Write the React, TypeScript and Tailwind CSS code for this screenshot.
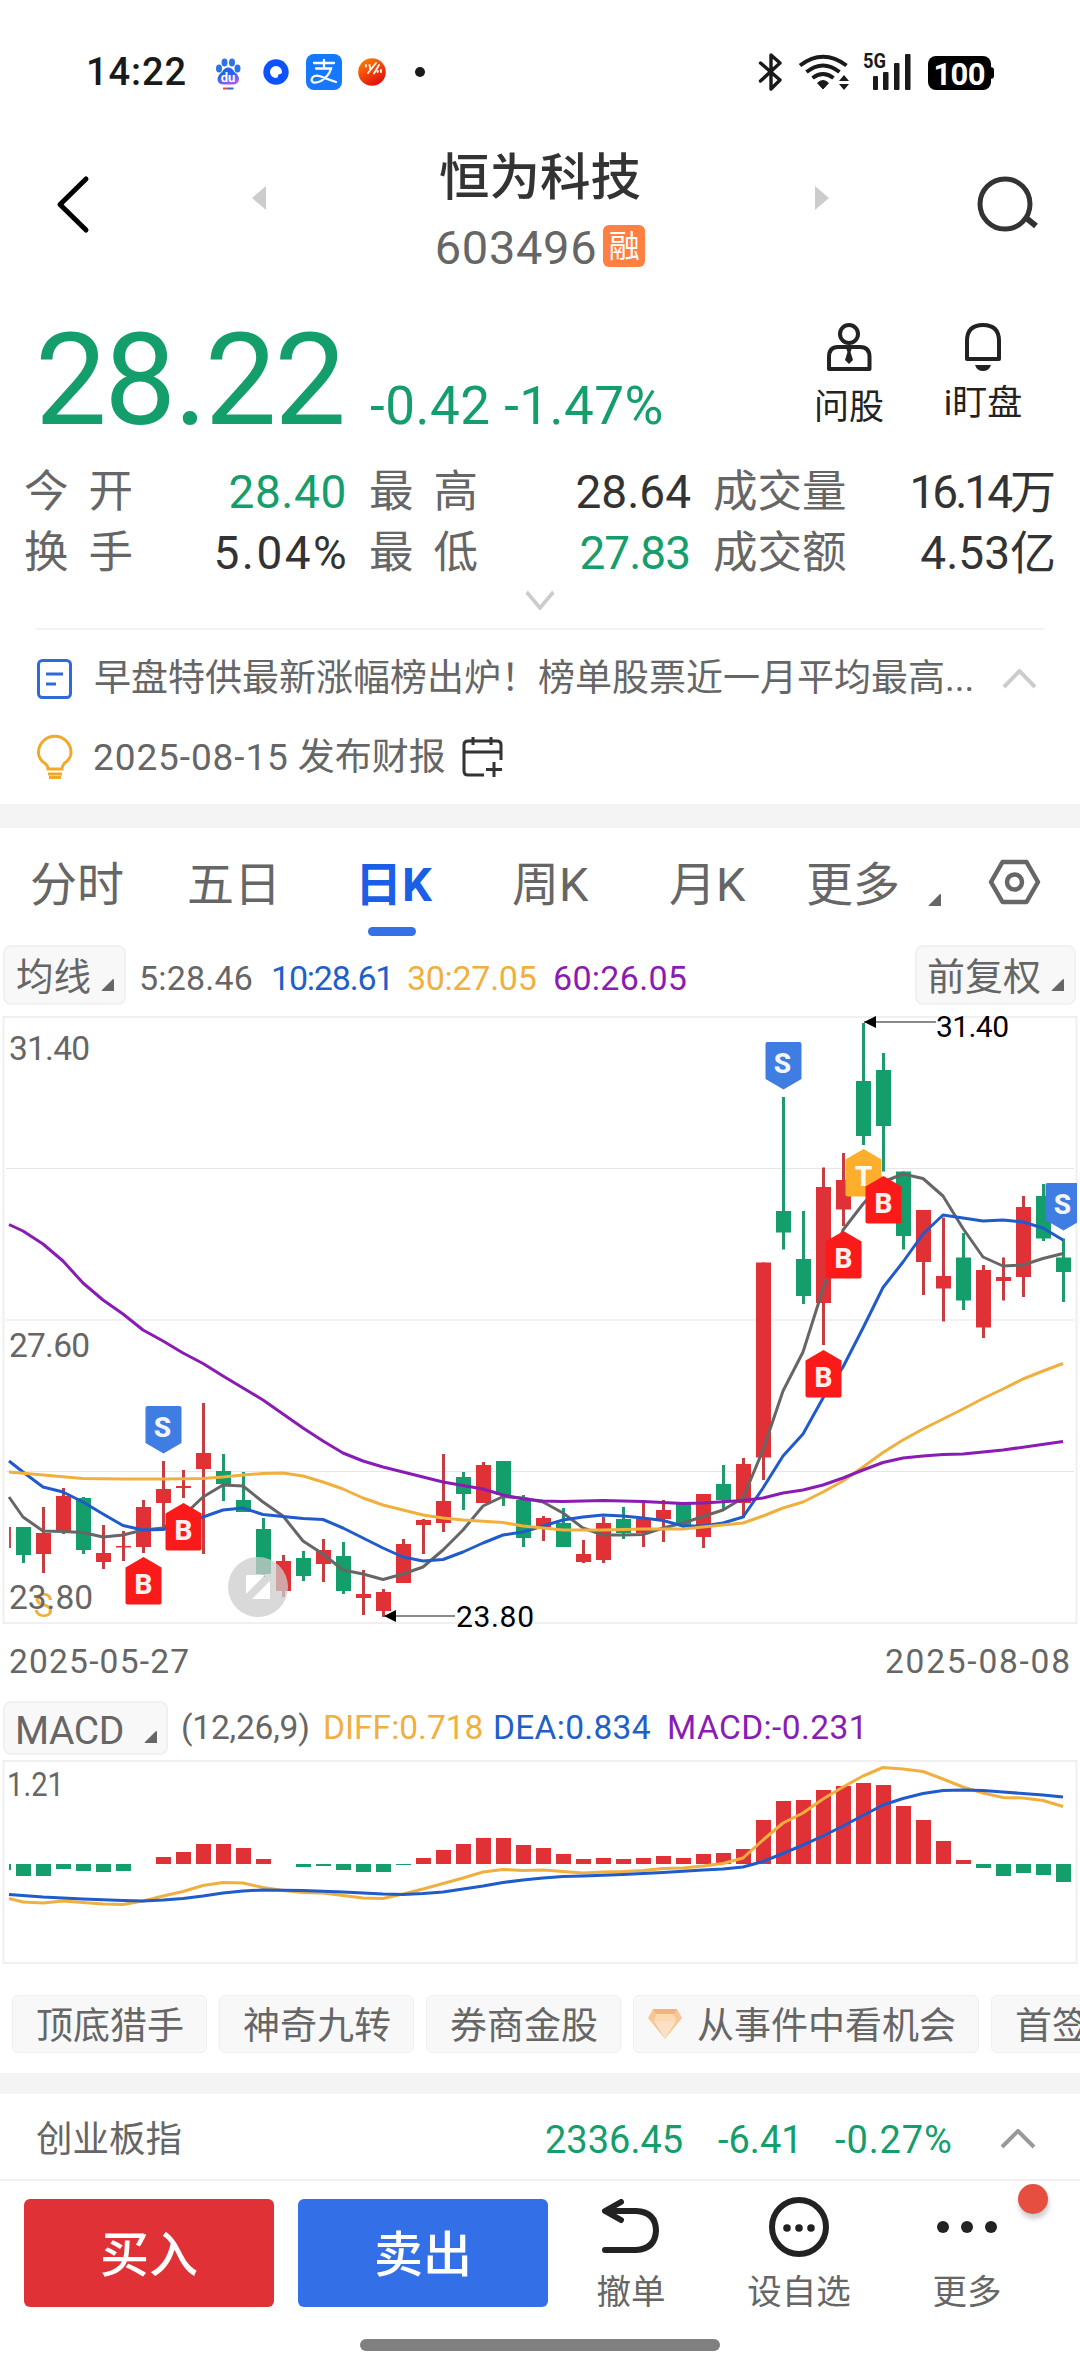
import { clsx } from 'clsx'

const RED = '#e03236'
const GREEN = '#149e6b'

// x of the n-th trading day in both charts
const px = (i: number) => 23.5 + i * 20

// [up, bodyTop, bodyBottom, high, low]
const candles: [number, number, number, number, number][] = [
  [0, 1527, 1555, 1527, 1563],
  [1, 1533, 1554, 1507, 1573],
  [1, 1496, 1531, 1488, 1534],
  [0, 1498, 1550, 1497, 1554],
  [1, 1553, 1562, 1525, 1569],
  [1, 1546, 1547.5, 1531, 1561],
  [1, 1507, 1547, 1500, 1553],
  [1, 1489, 1503, 1461, 1527],
  [1, 1486, 1488, 1470, 1498],
  [1, 1453, 1469, 1403, 1554],
  [0, 1471, 1484, 1454, 1501],
  [0, 1500, 1512, 1472, 1512],
  [0, 1529, 1574, 1518, 1577],
  [1, 1561, 1591, 1555, 1597],
  [0, 1558, 1576, 1551, 1581],
  [1, 1550, 1564, 1539, 1582],
  [0, 1556, 1591, 1542, 1594],
  [1, 1594, 1598, 1570, 1615],
  [1, 1592, 1611, 1589, 1617],
  [1, 1544, 1583, 1539, 1583],
  [1, 1520, 1525, 1519, 1554],
  [1, 1501, 1523, 1454, 1532],
  [0, 1477, 1494, 1472, 1510],
  [1, 1465, 1503, 1462, 1503],
  [0, 1461, 1495, 1461, 1506],
  [0, 1500, 1538, 1495, 1547],
  [1, 1518, 1527, 1516, 1541],
  [0, 1523, 1547, 1508, 1547],
  [1, 1554, 1562, 1540, 1563],
  [1, 1523, 1560, 1517, 1563],
  [0, 1519, 1533, 1507, 1539],
  [1, 1519, 1533, 1500, 1547],
  [1, 1510, 1519, 1500, 1542],
  [0, 1504, 1526, 1504, 1530],
  [1, 1494, 1537, 1494, 1548],
  [0, 1484, 1500, 1465, 1509],
  [1, 1464, 1503, 1458, 1518],
  [1, 1262.5, 1457.5, 1262.5, 1480],
  [0, 1211, 1232.5, 1097, 1249.5],
  [0, 1259, 1296, 1211, 1304],
  [1, 1187, 1303, 1167.5, 1345],
  [1, 1180, 1209.5, 1153, 1226],
  [0, 1081, 1136, 1023, 1145],
  [0, 1070, 1126, 1053, 1171.5],
  [0, 1171.5, 1236, 1171.5, 1249.5],
  [1, 1210, 1262, 1210, 1295],
  [1, 1276, 1288.5, 1217.5, 1321.5],
  [0, 1257.5, 1300.5, 1233, 1310],
  [1, 1270, 1327.5, 1265, 1338],
  [1, 1277, 1281, 1257.5, 1300.5],
  [1, 1207, 1277, 1196, 1297],
  [0, 1196, 1238.5, 1184, 1241],
  [0, 1257.5, 1272, 1238.5, 1302],
]

const ma5 = '9,1497 23,1517 43,1531 63,1531.5 83,1532.5 103,1537 123,1535 143,1530 163,1528 183,1516 203,1497 223,1485 243,1486 263,1502 283,1516 303,1541 323,1554 343,1570 363,1574 383,1579.5 403,1574 423,1567 443,1550 463,1530 483,1506 503,1496.5 523,1498 543,1502 563,1513 583,1528 603,1535 623,1535 643,1534.5 663,1528 683,1523 703,1516.5 723,1510 743,1498 763,1450 783,1391 803,1352 823,1289 843,1230 863,1204 883,1182 903,1174 923,1178.5 943,1196 963,1228.5 983,1257 1003,1266 1023,1265 1043,1258.5 1063,1253.5'
const ma10 = '9,1461 23,1472 43,1487 63,1492 83,1502 103,1514 123,1525.5 143,1530 163,1529.5 183,1523 203,1517 223,1510 243,1508 263,1514.5 283,1516.5 303,1518.5 323,1519.5 343,1528 363,1538 383,1548 403,1557 423,1561 443,1559.5 463,1552 483,1543 503,1535 523,1532 543,1526 563,1520 583,1517 603,1515 623,1516 643,1518 663,1520.5 683,1526 703,1526 723,1523 743,1517 763,1488 783,1456 803,1434 823,1398 843,1367 863,1328 883,1287.5 903,1262 923,1234 943,1215 963,1218 983,1221 1003,1220 1023,1222 1043,1228 1063,1240'
const ma30 = '9,1472 43,1475 83,1478.5 123,1479 163,1479 203,1478.5 223,1477 243,1475 263,1473.5 283,1473 303,1476 323,1482 343,1489 363,1498 383,1505 403,1510 423,1515 443,1518 463,1520 503,1522.5 523,1526 543,1528 563,1530 603,1530 643,1529 683,1529 703,1527 743,1523 763,1516 783,1508 803,1502 823,1492 843,1481 863,1467 883,1452.5 903,1440 923,1429 943,1419 963,1409 983,1398.5 1003,1389 1023,1379 1043,1371 1063,1363.5'
const ma60 = '9,1224.5 23,1231 43,1244 63,1261 83,1283 103,1300 123,1314 143,1330 163,1341 183,1353 203,1363.5 223,1376 243,1388 263,1400 283,1414 303,1428 323,1441 343,1453 363,1461 383,1467 403,1472 443,1482 483,1489 503,1495 523,1499 543,1501 563,1501.5 603,1500.5 643,1501.5 683,1503.5 703,1503 743,1500.5 763,1498 783,1493 803,1490 823,1485 843,1478 863,1470 883,1462.5 903,1458 923,1456 943,1454.5 963,1454 1003,1450 1063,1441.5'

const bars = [
  -12, -12, -5, -7, -8, -7, 0, 7, 12, 20, 20, 16, 5, 0, -3, -2, -6, -8, -8, -1, 6, 14, 20, 26, 26, 19, 16, 10, 5, 6, 5, 6,
  8, 6, 10, 11, 15, 44, 63, 64, 74, 78, 81, 79, 58, 44, 23, 4, -4, -12, -9, -11, -18,
]
const diff = '9,1898.5 23,1902 43,1903 63,1901 83,1902.5 103,1904 123,1904.5 143,1901 163,1896 183,1891.5 203,1885.5 223,1882.5 243,1883 263,1887.5 283,1890.5 303,1892.5 323,1893 343,1895.5 363,1898 383,1898.5 403,1894 423,1889 443,1883.5 463,1878 483,1872 503,1869.5 523,1870.5 543,1870 563,1871.5 583,1873 603,1872 623,1871.5 643,1870.5 663,1868.5 683,1868 703,1866 723,1863.5 743,1858 763,1840 783,1823 803,1813 823,1799 843,1787 863,1776 883,1767.5 903,1769 923,1771.5 943,1779 963,1787 983,1793 1003,1797.5 1023,1798 1043,1800.5 1063,1806.5'
const dea = '9,1894.5 43,1897 83,1899 123,1900.5 143,1901 163,1900 183,1898.5 203,1896 223,1893 243,1891 263,1890 303,1890.5 343,1892 383,1894 403,1894.5 423,1893.5 443,1892 463,1889 483,1886 503,1882.5 523,1880 543,1878 563,1876.5 583,1876 623,1874.5 663,1872.5 703,1870 723,1869 743,1867 763,1861.5 783,1853.5 803,1845 823,1836 843,1826 863,1815.5 883,1805 903,1798.5 923,1793.5 943,1790.5 963,1790 983,1790.5 1003,1792 1023,1793.5 1043,1795 1063,1797'

const marks: { x: number; y: number; t: 'S' | 'B' | 'T' }[] = [
  { x: 163.5, y: 1406, t: 'S' },
  { x: 143.5, y: 1557, t: 'B' },
  { x: 183.5, y: 1503, t: 'B' },
  { x: 783.5, y: 1042, t: 'S' },
  { x: 863.5, y: 1149, t: 'T' },
  { x: 883.5, y: 1176, t: 'B' },
  { x: 843.5, y: 1231, t: 'B' },
  { x: 823.5, y: 1350, t: 'B' },
  { x: 1063.5, y: 1183, t: 'S' },
]

function Mark({ x, y, t }: { x: number; y: number; t: 'S' | 'B' | 'T' }) {
  const down = t === 'S'
  return (
    <g transform={`translate(${x} ${y})`}>
      <path
        d={
          down
            ? 'M-16 0H16Q18 0 18 2V37L0 47.5L-18 37V2Q-18 0 -16 0Z'
            : 'M0 0L18 10.500V45.500Q18 47.500 16 47.500H-16Q-18 47.500 -18 45.500V10.500Z'
        }
        fill={down ? '#3f7de3' : t === 'B' ? '#fa1a1a' : '#ffae2b'}
      />
      <text x={down ? -1 : 0} y={down ? 30.5 : 37} textAnchor="middle" fontSize="28" fontWeight="800" fill="#fff" opacity="0.93">
        {t}
      </text>
    </g>
  )
}

function Corner() {
  return (
    <svg width="14" height="13" viewBox="0 0 14 13" className="shrink-0">
      <path d="M12 0Q13 0 13 1V12H1Q0 12 1 11Z" fill="#666" />
    </svg>
  )
}

function Chevron({ down, color, w }: { down?: boolean; color: string; w: number }) {
  return (
    <svg width={w} height="20" viewBox="0 0 36 20" preserveAspectRatio="none" fill="none" stroke={color} strokeWidth="4">
      <path d={down ? 'M2 2L18 18L34 2' : 'M2 18L18 2L34 18'} />
    </svg>
  )
}

function StatusBar() {
  return (
    <div className="flex h-[120px] items-center pt-[24px]">
      <span className="ml-[86px] w-[102px] text-[38px] font-medium leading-none tracking-[0.9px] text-[#1a1a1a]">14:22</span>
      <svg width="240" height="60" viewBox="0 0 240 60" className="mb-[4px] ml-[12px]">
        <defs>
          <linearGradient id="paw" x1="0" y1="0" x2="0.4" y2="1">
            <stop offset="0.5" stopColor="#2563eb" />
            <stop offset="1" stopColor="#a05cf5" />
          </linearGradient>
          <linearGradient id="sun" x1="0" y1="0" x2="0.6" y2="1">
            <stop offset="0" stopColor="#ff8a00" />
            <stop offset="1" stopColor="#e50f0f" />
          </linearGradient>
        </defs>
        <g fill="#2c72e8">
          <ellipse cx="19" cy="28.500" rx="3" ry="4" />
          <ellipse cx="24.500" cy="22.500" rx="3" ry="4" />
          <ellipse cx="32" cy="22.500" rx="3" ry="4" />
          <ellipse cx="37.500" cy="28.500" rx="3" ry="4" />
          <path d="M28 27.500Q32 27.500 34.500 32Q39 35 39 39.500Q38 44.500 33 44.500H23Q17.500 44 17.500 39Q18 35 22 32Q24.500 27.500 28 27.500Z" fill="url(#paw)" />
        </g>
        <text x="28" y="42" fontSize="13" fontWeight="700" textAnchor="middle" fill="#fff">du</text>
        <path d="M23 48.500H28" stroke="#e44" strokeWidth="2" />
        <path d="M28 48.500H33.500" stroke="#36c" strokeWidth="2" />
        <circle cx="76" cy="32" r="12.700" fill="#0d52ff" />
        <path d="M82 32A6 6 0 1 0 76 38Q78 38 78 36Q78 34 80 34Q82 34 82 32Z" fill="#fff" />
        <rect x="106" y="14" width="36" height="36" rx="8" fill="#1677ff" />
        <g fill="none" stroke="#fff" strokeWidth="2.300" strokeLinecap="round">
          <path d="M114 23H134M124 20V28M116 28.500H131Q129 36 121 41Q112 45 111.500 39.500Q113 34 121 36.500Q130 40 136 42" />
        </g>
        <circle cx="172" cy="32" r="13.800" fill="url(#sun)" />
        <path d="M166 25V26.500M169.500 25L170.500 30M176 23L168 33M179 25L174 33.500M178 31L177.500 32M181 30V32" stroke="#fff" strokeWidth="1.800" strokeLinecap="round" />
        <circle cx="220" cy="32" r="5" fill="#1a1a1a" />
      </svg>
      <svg width="256" height="60" viewBox="750 40 256 60" className="mb-[4px] ml-[310px]">
        <path d="M760.500 63L780 80L771 89V55L780 63L760.500 81" fill="none" stroke="#1a1a1a" strokeWidth="3.400" strokeLinejoin="round" strokeLinecap="round" />
        <g fill="none" stroke="#1a1a1a" strokeWidth="4">
          <path d="M800 65.500Q823 48 846.500 65.500" />
          <path d="M806.500 72Q823 59 839.500 72" />
          <path d="M812.500 78Q823 70 833.500 78" />
        </g>
        <path d="M817.500 83Q823 78 828.500 83L823 89Z" fill="#1a1a1a" stroke="#1a1a1a" />
        <path d="M844 75L849 81H839ZM844 90L839 84H849Z" fill="#1a1a1a" />
        <text x="863" y="68" fontSize="20" fontWeight="700" textLength="23" lengthAdjust="spacingAndGlyphs" fill="#1a1a1a">5G</text>
        <g fill="#1a1a1a">
          <rect x="873" y="76" width="5" height="14" rx="1" />
          <rect x="883" y="72" width="5.500" height="18" rx="1" />
          <rect x="894" y="63" width="5.500" height="27" rx="1" />
          <rect x="905" y="54" width="5.500" height="36" rx="1" />
        </g>
        <rect x="928" y="56" width="63" height="34" rx="8" />
        <path d="M990 67Q994 67 994 70V76Q994 79 990 79Z" />
        <text x="959.500" y="84.500" fontSize="31" fontWeight="700" textAnchor="middle" textLength="52" fill="#fff">100</text>
      </svg>
    </div>
  )
}

function Header() {
  return (
    <div className="flex h-[168px] pl-[54px]">
      <svg width="40" height="64" viewBox="54 172 40 64" className="mt-[52px]" fill="none" stroke="#000" strokeWidth="5" strokeLinecap="round" strokeLinejoin="round">
        <path d="M86 179L60 204.500L86 230" />
      </svg>
      <svg width="14" height="26" viewBox="0 0 14 26" className="ml-[158px] mt-[65px]">
        <path d="M14 1V25L0 13Z" fill="#ccc" />
      </svg>
      <div className="ml-[159px] flex w-[230px] flex-col items-center pt-[30px]">
        <h1 className="whitespace-nowrap text-[50.5px] font-medium leading-[56px] text-[#333]">恒为科技</h1>
        <div className="mt-[13px] flex items-center gap-[6px]">
          <span className="pt-[4px] text-[47px] leading-[50px] tracking-[0.7px] text-[#666]">603496</span>
          <span className="flex h-[42px] w-[42px] items-center justify-center rounded-[6px] bg-[#ff8040] text-[31px] leading-none text-white">融</span>
        </div>
      </div>
      <svg width="14" height="26" viewBox="0 0 14 26" className="ml-[160px] mt-[65px]">
        <path d="M0 1V25L14 13Z" fill="#ccc" />
      </svg>
      <svg width="64" height="60" viewBox="976 174 64 60" className="ml-[147px] mt-[54px]" fill="none" stroke="#333" strokeWidth="5">
        <circle cx="1005" cy="204" r="25" />
        <path d="M1025 217L1036 226" strokeWidth="6" />
      </svg>
    </div>
  )
}

function Price() {
  return (
    <div className="flex h-[162px] text-[#149e6b]">
      <span className="w-[332px] whitespace-nowrap pl-[35px] pt-[37px] text-[128px] leading-[110px] tracking-[-2.6px]">28.22</span>
      <span className="w-[448px] whitespace-nowrap pl-[38px] pt-[88px] text-[53px] leading-[60px] tracking-[0.5px]">-0.42 -1.47%</span>
      <div className="ml-[34px] flex w-[70px] flex-col items-center pt-[34px] text-[#222]">
        <svg width="48" height="52" viewBox="825 322 48 52" fill="none" stroke="#222" strokeWidth="4">
          <circle cx="849" cy="334" r="9" />
          <path d="M829 369V357Q829 347 838 347H860Q869.500 347 869.500 357V369Z" strokeLinejoin="round" />
          <path d="M846 348H852L850.500 352L853 360L849 364L845 360L847.500 352Z" fill="#222" stroke="none" />
        </svg>
        <span className="mt-[16px] whitespace-nowrap text-[35px] leading-[36px]">问股</span>
      </div>
      <div className="ml-[60px] flex w-[78px] flex-col items-center pt-[34px] text-[#222]">
        <svg width="40" height="52" viewBox="963 322 40 52" fill="none" stroke="#222" strokeWidth="4">
          <path d="M967 359V341Q967 325 983 325Q999 325 999 341V359Z" strokeLinejoin="round" />
          <path d="M975 365H991Q989 371 983 371Q977 371 975 365Z" fill="#222" stroke="none" />
        </svg>
        <span className="mt-[12px] whitespace-nowrap text-[35px] leading-[36px]">i盯盘</span>
      </div>
    </div>
  )
}

// [label, value, value classes]
const stats = [
  [
    ['今 开', '28.40', 'text-[#149e6b] tracking-[0.6px]'],
    ['最 高', '28.64', 'text-[#333]'],
    ['成交量', '16.14万', 'text-[#333] tracking-[-3px] mr-[3px]'],
  ],
  [
    ['换 手', '5.04%', 'text-[#333] tracking-[2.4px] -mr-[2px]'],
    ['最 低', '27.83', 'text-[#149e6b] tracking-[-1px] mr-px'],
    ['成交额', '4.53亿', 'text-[#333]'],
  ],
]

function Stats() {
  return (
    <div className="h-[178px] pt-[12px]">
      {stats.map((row, r) => (
        <div key={r} className="grid h-[61px] grid-cols-[323px_322px_343px] gap-x-[22px] pl-[24px]">
          {row.map(([label, value, cls]) => (
            <div key={label} className="flex items-center justify-between whitespace-nowrap text-[46px] leading-[61px]">
              <span className="text-[44.5px] text-[#666] [word-spacing:9px]">{label}</span>
              <span className={cls}>{value}</span>
            </div>
          ))}
        </div>
      ))}
      <div className="flex justify-center pt-[6px]">
        <Chevron down color="#ccc" w={30} />
      </div>
    </div>
  )
}

function News() {
  return (
    <div className="mx-[36px] h-[176px] border-t-2 border-[#f2f2f2] text-[37px] leading-[50px] text-[#666]">
      <div className="flex items-center pt-[23px]">
        <svg width="37" height="42" viewBox="36 658 37 42" fill="none" stroke="#2f6bd8" strokeWidth="3">
          <rect x="38.500" y="660.500" width="32" height="37" rx="4" />
          <path d="M46 674H63M46 684H56" />
        </svg>
        <span className="ml-[21px] w-[890px] whitespace-nowrap pt-px">早盘特供最新涨幅榜出炉！榜单股票近一月平均最高...</span>
        <span className="ml-[18px]"><Chevron color="#ccc" w={35} /></span>
      </div>
      <div className="flex items-center pt-[27px]">
        <svg width="37" height="46" viewBox="36 731 37 46" fill="none" stroke="#f0a92b" strokeWidth="3">
          <path d="M48 766Q48 762 43 759Q38.500 755 38.500 749.500A16 16 0 0 1 71 749.500Q71 755 66 759Q62 762 62 766ZM48 771H62M49 774.500H61" />
        </svg>
        <span className="ml-[20px] whitespace-nowrap pt-[2px] tracking-[0.9px]">2025-08-15</span>
        <span className="ml-[9px] whitespace-nowrap pt-[2px]">发布财报</span>
        <svg width="44" height="44" viewBox="461 732 44 44" className="ml-[15px]" fill="none" stroke="#333" strokeWidth="3">
          <path d="M501 757V742Q501 738 497 738H468Q464 738 464 742V768Q464 772 468 772H484M464 749H501M473 734V742M491 734V742M486 766.500H502M494 759V774" />
        </svg>
      </div>
    </div>
  )
}

const periods = [
  ['分时', 'w-[157px]'],
  ['五日', 'w-[168px]'],
  ['日K', 'w-[157px]'],
  ['周K', 'w-[157px]'],
  ['月K', 'w-[137px]'],
  ['更多', 'w-[122px]'],
]

function Periods() {
  return (
    <div className="flex h-[116px] items-start pl-[30px] pt-[27px] text-[47px] leading-[60px] text-[#666]">
      {periods.map(([name, w]) => (
        <div key={name} className={clsx('whitespace-nowrap', w, name === '日K' && 'font-bold text-[#1a5fe6]')}>
          {name}
          {name === '日K' && <div className="ml-[13px] mt-[12px] h-[9px] w-[48px] rounded-full bg-[#3470e6]" />}
        </div>
      ))}
      <div className="mt-[39px]"><Corner /></div>
      <svg width="54" height="50" viewBox="987 857 54 50" className="ml-[45px] mt-[2px]" fill="none" stroke="#666" strokeWidth="4.500" strokeLinejoin="round">
        <path d="M1002.500 862H1026.500L1038 882L1026.500 902H1002.500L991 882Z" />
        <circle cx="1014.500" cy="882" r="7.500" />
      </svg>
    </div>
  )
}

function Averages() {
  return (
    <div className="flex h-[72px] items-start pl-[3px] pr-[4px] pt-px text-[34px] leading-[60px]">
      <button className="flex h-[60px] w-[123px] items-center rounded-[8px] border-2 border-[#f1f1f1] bg-[#f8f8f8] pl-[11px] text-[37.5px] text-[#666]">
        <span className="pt-[3px]">均线</span>
        <span className="ml-[10px] mt-[20px]"><Corner /></span>
      </button>
      <div className="ml-[13px] flex gap-[17px] whitespace-nowrap pt-[3px] tracking-[-0.1px]">
        <span className="w-[115px] tracking-[0.2px] text-[#666]">5:28.46</span>
        <span className="w-[119px] tracking-[-1.2px] text-[#1f5fc9]">10:28.61</span>
        <span className="w-[129px] tracking-[-0.3px] text-[#f0b03f]">30:27.05</span>
        <span className="w-[134px] tracking-[0.3px] text-[#8a1bb3]">60:26.05</span>
      </div>
      <button className="ml-auto flex h-[60px] w-[161px] items-center rounded-[8px] border-2 border-[#f1f1f1] bg-[#f8f8f8] pl-[10px] text-[38px] text-[#666]">
        <span className="pt-[3px]">前复权</span>
        <span className="ml-[10px] mt-[20px]"><Corner /></span>
      </button>
    </div>
  )
}

function KLine() {
  return (
    <svg width="1080" height="668" viewBox="0 1016 1080 668" className="block" fill="none">
      <clipPath id="plot"><rect x="3" y="1010" width="1074" height="620" /></clipPath>
      <path d="M3.500 1017H1076.500V1623H3.500Z" stroke="#f0f0f0" strokeWidth="2" />
      <path d="M6 1168.500H1074M6 1471.500H1074" stroke="#e6e6e6" />
      <path d="M6 1320H1074" stroke="#f1f1f1" strokeWidth="2" />
      <path d="M10 1527V1548" stroke="#c94a4e" strokeWidth="2" />
      {candles.map(([up, top, bottom, high, low], i) => (
        <g key={i} fill={up ? RED : GREEN}>
          <rect x={px(i) - 1.5} y={high} width="3" height={low - high} fill={up ? '#c73e42' : '#20996c'} />
          <rect x={px(i) - 7.5} y={top} width="15" height={bottom - top} />
        </g>
      ))}
      <g strokeWidth="3" strokeLinejoin="round">
        <polyline points={ma5} stroke="#666" />
        <polyline points={ma10} stroke="#1f5bcb" />
        <polyline points={ma30} stroke="#f0b03f" />
        <polyline points={ma60} stroke="#8a1bb3" />
      </g>
      <text x="43.500" y="1617" textAnchor="middle" fontSize="33" fill="#f0b03f">S</text>
      <g clipPath="url(#plot)">
        {marks.map((m, i) => <Mark key={i} {...m} />)}
      </g>
      <g fontSize="33.500" fill="#666">
        <text x="9" y="1060" textLength="81">31.40</text>
        <text x="9" y="1357" textLength="81">27.60</text>
        <text x="9" y="1609" textLength="84">23.80</text>
        <text x="9" y="1673" textLength="180">2025-05-27</text>
        <text x="885" y="1673" textLength="185">2025-08-08</text>
      </g>
      <g fontSize="30" fill="#000">
        <path d="M864 1022H936M384 1616H455" stroke="#666" strokeWidth="1.500" />
        <path d="M864 1022L876 1016V1028ZM384 1616L396 1610V1622Z" />
        <text x="936" y="1037" textLength="73">31.40</text>
        <text x="456" y="1627" textLength="78">23.80</text>
      </g>
      {/* fullscreen toggle */}
      <circle cx="258" cy="1587" r="30" fill="#ccc" opacity="0.75" />
      <path d="M247 1575H265L246 1594V1576ZM270 1581V1599H252Z" fill="#fff" />
    </svg>
  )
}

function Macd() {
  return (
    <>
      <div className="flex h-[76px] items-start whitespace-nowrap pl-[3px] pt-[17px] text-[33.5px] leading-[54px]">
        <button className="flex h-[54px] w-[165px] items-center rounded-[8px] border-2 border-[#f1f1f1] bg-[#f8f8f8] pl-[10px] text-[39px] tracking-[-0.4px] text-[#666]">
          <span className="w-[116px] pt-[6px] text-left">MACD</span>
          <span className="ml-[13px] mt-[18px]"><Corner /></span>
        </button>
        <span className="ml-[13px] w-[142px] tracking-[-0.2px] text-[#666]">(12,26,9)</span>
        <span className="w-[170px] text-[#f0b03f]">DIFF:0.718</span>
        <span className="w-[174px] tracking-[0.3px] text-[#1f5fc9]">DEA:0.834</span>
        <span className="tracking-[0.4px] text-[#8a1bb3]">MACD:-0.231</span>
      </div>
      <svg width="1080" height="206" viewBox="0 1760 1080 206" className="block" fill="none">
        <path d="M3.500 1761H1076.500V1963H3.500Z" stroke="#f0f0f0" strokeWidth="2" />
        <rect x="9" y="1864" width="2" height="6" fill={GREEN} />
        {bars.map((h, i) => (
          <rect key={i} x={px(i) - 7.5} y={h > 0 ? 1864 - h : 1864} width="15" height={Math.abs(h)} fill={h > 0 ? RED : GREEN} />
        ))}
        <g strokeWidth="3" strokeLinejoin="round">
          <polyline points={diff} stroke="#f0b03f" />
          <polyline points={dea} stroke="#1f5bcb" />
        </g>
        <text x="7" y="1796" fontSize="33.500" textLength="57" lengthAdjust="spacingAndGlyphs" fill="#666">1.21</text>
      </svg>
    </>
  )
}

function Chips() {
  const chip = 'flex h-[58px] shrink-0 items-center rounded-[6px] border border-[#efefef] bg-[#f8f8f8] pl-[23px] pt-[5px]'
  return (
    <div className="flex h-[107px] gap-[12px] overflow-hidden whitespace-nowrap pl-[12px] pt-[29px] text-[37px] leading-[52px] text-[#666]">
      <div className={clsx(chip, 'w-[195px]')}>顶底猎手</div>
      <div className={clsx(chip, 'w-[195px]')}>神奇九转</div>
      <div className={clsx(chip, 'w-[195px]')}>券商金股</div>
      <div className={clsx(chip, 'w-[346px]')}>
        <svg width="34" height="30" viewBox="0 0 34 30" className="-ml-[9px] -mt-[6px] mr-[15px]">
          <path d="M5 0H29L34 9L17 30L0 9Z" fill="#f7c795" />
          <path d="M5 0H29L26 5H8Z" fill="#f3b47c" />
          <path d="M8 5H26L28 12H6Z" fill="#fbd9b2" />
          <path d="M6 12H28L17 30Z" fill="#fbe0c5" />
        </svg>
        从事件中看机会
      </div>
      <div className={clsx(chip, 'w-[195px]')}>首签</div>
    </div>
  )
}

function BottomBar() {
  return (
    <>
      <div className="flex h-[87px] items-center whitespace-nowrap border-b-2 border-[#f1f1f1] pl-[36px] pt-[4px] text-[38px] text-[#149e6b]">
        <span className="w-[509px] pt-[4px] text-[36.5px] text-[#666]">创业板指</span>
        <span className="w-[173px] pt-[3px]">2336.45</span>
        <span className="w-[117px] pt-[3px]">-6.41</span>
        <span className="w-[165px] pt-[3px] tracking-[0.9px]">-0.27%</span>
        <Chevron color="#999" w={36} />
      </div>
      <div className="flex h-[158px] pl-[24px] pt-[18px] text-[34.5px] leading-[40px] text-[#666]">
        <button className="mr-[24px] h-[108px] w-[250px] rounded-[6px] bg-[#e03236] pt-[6px] text-[49px] font-medium text-white">买入</button>
        <button className="h-[108px] w-[250px] rounded-[6px] bg-[#3370e8] pt-[6px] text-[49px] font-medium text-white">卖出</button>
        <div className="ml-[33px] flex w-[100px] flex-col items-center">
          <svg width="64" height="60" viewBox="601 2199 64 60" fill="none" stroke="#222" strokeWidth="6" strokeLinecap="round" strokeLinejoin="round">
            <path d="M623 2202L607 2211L623 2220M608 2211H638Q658 2212 658 2231Q657 2249 638 2250H607" />
          </svg>
          <span className="mt-[13px]">撤单</span>
        </div>
        <div className="ml-[58px] flex w-[120px] flex-col items-center">
          <svg width="64" height="60" viewBox="766 2198 64 60" fill="#222" className="overflow-visible">
            <circle cx="798" cy="2226" r="27" fill="none" stroke="#222" strokeWidth="6" />
            <circle cx="786" cy="2227" r="3.800" />
            <circle cx="798" cy="2227" r="3.800" />
            <circle cx="810" cy="2227" r="3.800" />
          </svg>
          <span className="mt-[13px] whitespace-nowrap">设自选</span>
        </div>
        <div className="relative ml-[58px] flex w-[100px] flex-col items-center">
          <svg width="64" height="60" viewBox="934 2198 64 60" fill="#222">
            <circle cx="942" cy="2226" r="6" />
            <circle cx="966" cy="2226" r="6" />
            <circle cx="990" cy="2226" r="6" />
          </svg>
          <span className="mt-[13px]">更多</span>
          <i className="absolute -right-[31px] -top-[15px] h-[30px] w-[30px] rounded-full bg-[#e64f40] shadow-[1px_5px_5px_rgba(0,0,0,0.2)]" />
        </div>
      </div>
      <div className="mx-auto h-[12px] w-[360px] rounded-full bg-[#808080]" />
    </>
  )
}

export default function App() {
  return (
    <div className="h-[2373px] w-[1080px] overflow-hidden bg-white font-['Roboto','Noto_Sans_CJK_SC',sans-serif]">
      <StatusBar />
      <Header />
      <Price />
      <Stats />
      <News />
      <div className="h-[24px] bg-[#f4f4f4]" />
      <Periods />
      <Averages />
      <KLine />
      <Macd />
      <Chips />
      <div className="h-[21px] bg-[#f4f4f4]" />
      <BottomBar />
    </div>
  )
}
